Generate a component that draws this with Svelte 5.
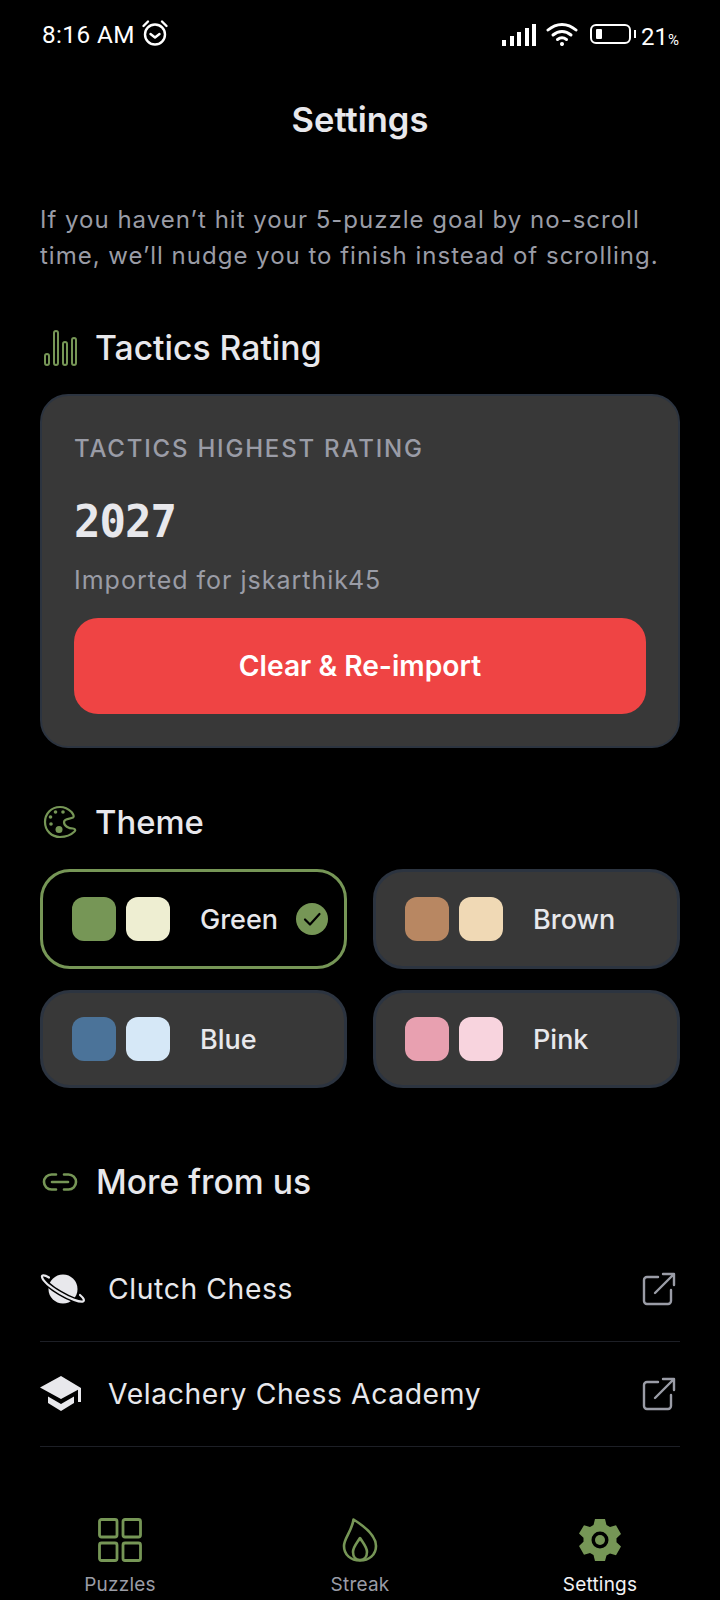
<!--
  App.svelte — chess puzzles settings screen.
-->
<script lang="ts">
  const themes = [
    { name: "Green", a: "#769656", b: "#eeeed2", selected: true },
    { name: "Brown", a: "#b88762", b: "#f0d9b5", selected: false },
    { name: "Blue", a: "#4b7399", b: "#d6e8f7", selected: false },
    { name: "Pink", a: "#e8a0b0", b: "#f8d4de", selected: false }
  ];
  const signal = [6, 10, 14, 18, 22];
</script>

<div class="screen">
  <!-- Status bar -->
  <div class="status">
    <div class="status-left">
      <span class="clock">8:16 AM</span>
      <svg class="alarm" viewBox="0 0 28 28" width="28" height="28" fill="none" stroke="#fff" stroke-width="2.400" stroke-linecap="round" stroke-linejoin="round">
        <circle cx="14" cy="15.500" r="10" />
        <path d="M9.500 15l4.500 3.500 4.500-3.500" />
        <path d="M2.500 7 7 2.500M25.500 7 21 2.500" />
      </svg>
    </div>
    <div class="status-right">
      <div class="signal">
        {#each signal as h}
          <i style="height: {h}px"></i>
        {/each}
      </div>
      <svg class="wifi" viewBox="0 0 32 24" width="32" height="24" fill="none" stroke="#fff" stroke-width="3" stroke-linecap="round">
        <path d="M2 8C10.500 .5 21.500 .5 30 8" />
        <path d="M7 13c5.500-4.600 12.500-4.600 18 0" />
        <path d="M11.500 17.500c2.800-2.200 6.200-2.200 9 0" />
        <circle cx="16" cy="22" r="1.300" fill="#fff" stroke-width="1.500" />
      </svg>
      <div class="battery"><i></i></div>
      <span class="battery-nub"></span>
      <span class="pct">21<small>%</small></span>
    </div>
  </div>

  <h1>Settings</h1>

  <main>
    <p class="intro">If you haven’t hit your 5-puzzle goal by no-scroll time, we’ll nudge you to finish instead of scrolling.</p>

    <h2 class="rating-head">
      <svg viewBox="0 0 34 38" width="34" height="38" fill="none" stroke="#769656" stroke-width="2">
        <rect x="2" y="25" width="4" height="11" rx="2" />
        <rect x="11" y="2" width="4" height="34" rx="2" />
        <rect x="20" y="13" width="4" height="23" rx="2" />
        <rect x="29" y="9" width="4" height="27" rx="2" />
      </svg>
      Tactics Rating
    </h2>

    <section class="card">
      <div class="card-label">TACTICS HIGHEST RATING</div>
      <div class="card-value">2027</div>
      <div class="card-note">Imported for jskarthik45</div>
      <button class="danger">Clear &amp; Re-import</button>
    </section>

    <h2 class="theme-head">
      <svg viewBox="0 0 34 34" width="34" height="34" fill="none" stroke="#769656" stroke-width="2.200">
        <path d="M17 2C8 2 2 9 2 17c0 9 7 15 15 15 6 0 11-2 14.500-5.500C33 25 32 23.500 30 23.500c-4.500 0-9-2.500-9-6.500 0-3.500 6-3 9-4.500 1.500-1 .5-3-1.500-5.500C25.500 4 21.500 2 17 2z" />
        <g fill="#769656" stroke="none">
          <circle cx="12.500" cy="7" r="1.800" />
          <circle cx="20" cy="7" r="1.800" />
          <circle cx="7.500" cy="12" r="1.800" />
          <circle cx="8" cy="19" r="1.800" />
          <circle cx="16" cy="24.500" r="3.500" />
        </g>
      </svg>
      Theme
    </h2>

    <div class="themes">
      {#each themes as t}
        <div class="theme" class:selected={t.selected}>
          <span class="swatch" style="background: {t.a}"></span>
          <span class="swatch second" style="background: {t.b}"></span>
          <span class="theme-name">{t.name}</span>
          {#if t.selected}
            <svg class="tick" viewBox="0 0 32 32" width="32" height="32">
              <circle cx="16" cy="16" r="16" fill="#769656" />
              <path d="M9 16.500l5 5L23.500 11" fill="none" stroke="#000" stroke-width="2.200" stroke-linecap="round" stroke-linejoin="round" />
            </svg>
          {/if}
        </div>
      {/each}
    </div>

    <h2 class="more-head">
      <svg viewBox="0 0 36 20" width="36" height="20" fill="none" stroke="#769656" stroke-width="2.600" stroke-linecap="round">
        <path d="M14 2.500H9.500a7.500 7.500 0 0 0 0 15H14" />
        <path d="M22 2.500h4.500a7.500 7.500 0 0 1 0 15H22" />
        <path d="M10 10h16" />
      </svg>
      More from us
    </h2>

    <div class="links">
      <div class="link">
        <svg viewBox="0 0 46 34" width="46" height="34">
          <circle cx="23" cy="17" r="14.500" fill="#e8e8ec" />
          <path d="M9 5.500C4 2.500 1.500 3 2 5c.8 3.500 8 10 18 16 10 6 20 9.500 23 8.500 2-.8.500-3.500-3-6.500" fill="none" stroke="#000" stroke-width="5" />
          <path d="M9 5.500C4 2.500 1.500 3 2 5c.8 3.500 8 10 18 16 10 6 20 9.500 23 8.500 2-.8.500-3.500-3-6.500" fill="none" stroke="#e8e8ec" stroke-width="2.200" stroke-linecap="round" />
        </svg>
        <span>Clutch Chess</span>
        <svg class="ext" viewBox="0 0 36 36" width="36" height="36" fill="none" stroke="#9a9ca6" stroke-width="2.400" stroke-linecap="round" stroke-linejoin="round">
          <path d="M17 6H6a3 3 0 0 0-3 3v21a3 3 0 0 0 3 3h21a3 3 0 0 0 3-3V19" />
          <path d="M14 22 33 3M22 3h11v11" />
        </svg>
      </div>
      <div class="link">
        <svg viewBox="0 0 46 36" width="46" height="36" fill="#e8e8ec">
          <path d="M21 0 0 11.500 21 23l17-9.300V26h3V12z" />
          <path d="M8 20.500V27l13 8 13-8v-6.500L21 28z" />
        </svg>
        <span>Velachery Chess Academy</span>
        <svg class="ext" viewBox="0 0 36 36" width="36" height="36" fill="none" stroke="#9a9ca6" stroke-width="2.400" stroke-linecap="round" stroke-linejoin="round">
          <path d="M17 6H6a3 3 0 0 0-3 3v21a3 3 0 0 0 3 3h21a3 3 0 0 0 3-3V19" />
          <path d="M14 22 33 3M22 3h11v11" />
        </svg>
      </div>
    </div>
  </main>

  <!-- Bottom tabs -->
  <nav>
    <div class="tab">
      <svg viewBox="0 0 44 44" width="44" height="44" fill="none" stroke="#769656" stroke-width="2.800" stroke-linejoin="round">
        <rect x="1.500" y="1.500" width="17.500" height="17.500" rx="2" />
        <rect x="25" y="1.500" width="17.500" height="17.500" rx="2" />
        <rect x="1.500" y="25" width="17.500" height="17.500" rx="2" />
        <rect x="25" y="25" width="17.500" height="17.500" rx="2" />
      </svg>
      <span>Puzzles</span>
    </div>
    <div class="tab">
      <svg viewBox="0 0 44 44" width="44" height="44" fill="none" stroke="#769656" stroke-width="2.600" stroke-linejoin="round">
        <path d="M15.500 1.500C26 8 38 17 38 28c0 9-7 14.500-16 14.500S6 37 6 28C6 20 14 13 15.500 1.500z" />
        <path d="M22 20c3 5 7 9 7 14 0 5-3 8-7 8s-7-3-7-8c0-5 4-9 7-14z" />
      </svg>
      <span>Streak</span>
    </div>
    <div class="tab active">
      <svg viewBox="0 0 44 44" width="44" height="44">
        <path fill="#769656" fill-rule="evenodd" d="M17 1h10l1.500 6 3.500 2 6-1.700 5 8.700-4.500 4.300v4l4.500 4.300-5 8.700-6-1.700-3.500 2L27 43H17l-1.500-6-3.500-2-6 1.700L1 28l4.500-4.300v-4L1 15.400l5-8.100 6 1.700 3.500-2zM22 13.500a8.500 8.500 0 1 0 0 17 8.500 8.500 0 0 0 0-17z" />
        <circle cx="22" cy="22" r="5" fill="#769656" />
      </svg>
      <span>Settings</span>
    </div>
  </nav>
</div>

<style>
  :global(body) {
    background: #000;
  }

  .screen {
    display: flex;
    flex-direction: column;
    height: 1600px;
    overflow: hidden;
    background: #000;
    color: #e8e8ec;
    font-family: Inter, "Noto Sans", sans-serif;
  }

  /* ── Status bar ───────────────────────────────── */
  .status {
    display: flex;
    justify-content: space-between;
    align-items: center;
    height: 68px;
    padding: 0 41px 0 42px;
    color: #fff;
    font-family: Roboto, sans-serif;
  }

  .status-left,
  .status-right {
    display: flex;
    align-items: center;
  }

  .clock {
    font-size: 24.300px;
    letter-spacing: 0.4px;
  }

  .alarm {
    margin-left: 6px;
    margin-top: -2px;
  }

  .signal {
    display: flex;
    align-items: flex-end;
    gap: 3.500px;
    height: 22px;
    margin-top: 2px;
  }

  .signal i {
    display: block;
    width: 4px;
    background: #fff;
  }

  .wifi {
    margin-left: 10px;
  }

  .battery {
    width: 41px;
    height: 20px;
    margin-left: 12px;
    padding: 3px 4px;
    box-sizing: border-box;
    border: 2px solid #fff;
    border-radius: 6px;
  }

  .battery i {
    display: block;
    width: 6px;
    height: 100%;
    border-radius: 1px;
    background: #fff;
  }

  .battery-nub {
    width: 2px;
    height: 8px;
    margin-left: 3px;
    background: #fff;
  }

  .pct {
    margin-left: 5px;
    margin-top: 6px;
    font-size: 24px;
  }

  .pct small {
    font-size: 15px;
  }

  /* ── Header ───────────────────────────────────── */
  h1 {
    margin: 28px 0 0;
    font-size: 34.500px;
    line-height: 48px;
    font-weight: 600;
    text-align: center;
  }

  main {
    padding: 0 40px;
  }

  .intro {
    margin: 58px 0 0;
    font-size: 24px;
    line-height: 36px;
    letter-spacing: 1px;
    color: #9a9ca6;
  }

  h2 {
    display: flex;
    align-items: center;
    gap: 18px;
    margin: 0;
    font-size: 33.700px;
    line-height: 44px;
    font-weight: 500;
  }

  .rating-head {
    margin-top: 52px;
    margin-left: 3px;
  }

  /* ── Rating card ──────────────────────────────── */
  .card {
    margin-top: 24px;
    padding: 37px 32px 32px;
    border: 2px solid #2c3440;
    border-radius: 28px;
    background: #383838;
  }

  .card-label {
    font-size: 24px;
    line-height: 32px;
    font-weight: 500;
    letter-spacing: 1.800px;
    color: #9a9ca6;
  }

  .card-value {
    margin-top: 27px;
    font-family: "DejaVu Sans Mono", monospace;
    font-size: 44px;
    line-height: 60px;
    font-weight: 700;
    letter-spacing: -1px;
  }

  .card-note {
    margin-top: 12px;
    font-size: 25px;
    line-height: 32px;
    letter-spacing: 1px;
    color: #9a9ca6;
  }

  .danger {
    display: block;
    width: 100%;
    height: 96px;
    margin-top: 22px;
    border: 0;
    border-radius: 24px;
    background: #ef4444;
    color: #fff;
    font: inherit;
    font-size: 28.200px;
    font-weight: 600;
  }

  /* ── Theme grid ───────────────────────────────── */
  .theme-head {
    margin-top: 52px;
    margin-left: 3px;
    font-size: 32.800px;
  }

  .themes {
    display: grid;
    grid-template-columns: 1fr 1fr;
    grid-template-rows: 100px 98px;
    gap: 21px 26px;
    margin-top: 25px;
  }

  .theme {
    display: flex;
    align-items: center;
    box-sizing: border-box;
    padding: 0 29px;
    border: 3px solid #2c3440;
    border-radius: 30px;
    background: #383838;
  }

  .theme.selected {
    border-color: #769656;
    background: #000;
  }

  .swatch {
    flex-shrink: 0;
    width: 44px;
    height: 44px;
    border-radius: 12px;
  }

  .swatch.second {
    margin-left: 10px;
  }

  .theme-name {
    margin-left: 30px;
    font-size: 27px;
    font-weight: 500;
  }

  .tick {
    margin-left: auto;
    margin-right: -13px;
  }

  /* ── Links ────────────────────────────────────── */
  .more-head {
    margin-top: 72px;
    margin-left: 2px;
  }

  .links {
    margin-top: 33px;
  }

  .link {
    display: flex;
    align-items: center;
    gap: 22px;
    height: 105px;
    box-sizing: border-box;
    border-bottom: 1px solid #1d1f26;
    font-size: 28.300px;
    letter-spacing: 0.600px;
  }

  .link span {
    flex: 1;
  }

  .ext {
    flex-shrink: 0;
    margin-right: 3px;
  }

  /* ── Bottom tabs ──────────────────────────────── */
  nav {
    display: grid;
    grid-template-columns: repeat(3, 1fr);
    margin-top: auto;
    padding-bottom: 1px;
  }

  .tab {
    display: flex;
    flex-direction: column;
    align-items: center;
    gap: 9px;
    font-size: 19px;
    line-height: 28px;
    letter-spacing: 0.200px;
    color: #9a9ca6;
  }

  .tab.active {
    color: #f2f2f4;
  }
</style>
